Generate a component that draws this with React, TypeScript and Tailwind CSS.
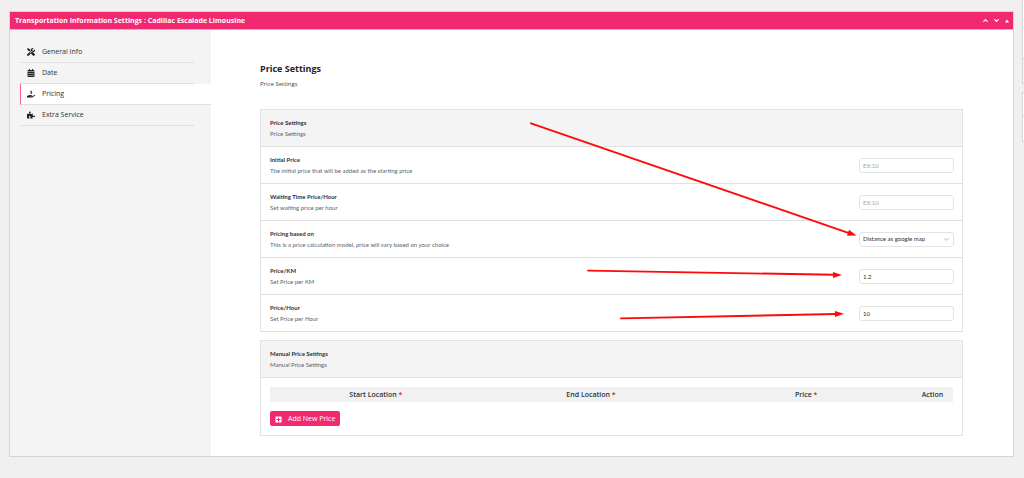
import { useId } from "react";
import type { ReactNode } from "react";
import { FaCalendarAlt, FaHandHoldingUsd, FaPlusSquare, FaPuzzlePiece, FaTools } from "react-icons/fa";
import { ChevronDown, ChevronUp } from "lucide-react";

const navItems = [
  { label: "General Info", icon: FaTools },
  { label: "Date", icon: FaCalendarAlt },
  { label: "Pricing", icon: FaHandHoldingUsd, active: true },
  { label: "Extra Service", icon: FaPuzzlePiece },
];

const field =
  "h-[15px] w-[95px] rounded-[3px] border border-[#e3e3e3] bg-white px-[3px] font-['Lato',sans-serif] text-[6px] leading-[12px] text-[#2c3338] placeholder:text-[#a5a5a5]";

function RowText({ title, text }: { title: ReactNode; text: string }) {
  return (
    <div className="font-['Lato',sans-serif] text-[6px] leading-[11px]">
      {title}
      <p className="text-[#5d646b]">{text}</p>
    </div>
  );
}

function SectionHead({ title, text }: { title: string; text: string }) {
  return (
    <div className="h-[37px] border-b border-[#e0e0e0] bg-[#f4f4f4] px-[9px] pt-[7px]">
      <RowText title={<h3 className="font-bold text-[#2c3338]">{title}</h3>} text={text} />
    </div>
  );
}

function SettingRow({ title, text, children }: { title: string; text: string; children: (id: string) => ReactNode }) {
  const id = useId();
  return (
    <div className="flex h-[37px] items-center justify-between border-b border-[#e0e0e0] pr-2 pl-[9px]">
      <RowText
        title={
          <label htmlFor={id} className="block font-bold text-[#2c3338]">
            {title}
          </label>
        }
        text={text}
      />
      {children(id)}
    </div>
  );
}

function Required() {
  return <span className="text-[#e02020]">*</span>;
}

// red callout arrows over the rows
function Arrows() {
  return (
    <svg
      className="pointer-events-none absolute top-0 right-0"
      width="440"
      height="223"
      viewBox="522 110 440 223"
      fill="#ff0a0a"
      stroke="#ff0a0a"
      aria-hidden="true"
    >
      <path d="M531 123.3 849 233.1M588 270.6 835 274.8M621 318.4 836 314" strokeWidth="1.9" strokeLinecap="round" />
      <path d="M856.5 235.6 847 235.8 849 229.8zM842 275 833 277.9V272zM844 313.7 835 316.9 834.8 310.9z" stroke="none" />
    </svg>
  );
}

export default function App() {
  return (
    <div className="flex min-h-screen items-start gap-2 bg-[#f0f0f0] pl-[9px] font-['Open_Sans',sans-serif]">
      <main className="mt-[11px] min-w-0 flex-1 border border-[#d5d5d5] bg-white">
        <header className="flex h-[18px] items-center justify-between border-b border-[#f7a5c3] bg-[#f22971] pr-1 pl-[5px] text-white">
          <h1 className="text-[7px] leading-[12px] font-bold">Transportation Information Settings : Cadillac Escalade Limousine</h1>
          <div className="flex items-center gap-1">
            <button type="button" aria-label="Move up">
              <ChevronUp size={7} strokeWidth={4} />
            </button>
            <button type="button" aria-label="Move down">
              <ChevronDown size={7} strokeWidth={4} />
            </button>
            <button type="button" aria-label="Toggle panel">
              <svg className="ml-px" width="4" height="4" viewBox="0 0 4 4" fill="currentColor">
                <path d="M2 .5 4 3.5H0z" />
              </svg>
            </button>
          </div>
        </header>

        <div className="flex">
          <nav className="w-[201px] shrink-0 bg-[#f4f4f4] pt-3 pl-[10px]">
            {navItems.map(({ label, icon: Icon, active }) => (
              <a
                key={label}
                href="#"
                className={
                  active
                    ? "flex h-[21px] items-center gap-[7px] border-b border-l border-b-[#e0e0e0] border-l-[#f75f96] bg-white pl-[6px] text-[7px] text-[#2c3338]"
                    : "mr-[17px] flex h-[21px] items-center gap-[7px] border-b border-[#e0e0e0] pl-[7px] text-[7px] text-[#2c3338]"
                }
              >
                <Icon className="h-2 w-auto text-[#1d2327]" />
                {label}
              </a>
            ))}
          </nav>

          <div className="min-w-0 flex-1 pt-8 pr-[50px] pb-5 pl-[49px]">
            <h2 className="text-[9px] leading-[14px] font-bold text-[#1d2327]">Price Settings</h2>
            <p className="mt-[2px] text-[6px] leading-[12px] text-[#3c434a]">Price Settings</p>

            <section className="relative mt-[19px] border border-b-0 border-[#e3e3e3]">
              <SectionHead title="Price Settings" text="Price Settings" />
              <SettingRow title="Initial Price" text="The initial price that will be added as the starting price">
                {(id) => <input id={id} type="text" placeholder="EX:10" className={field} />}
              </SettingRow>
              <SettingRow title="Waiting Time Price/Hour" text="Set waiting price per hour">
                {(id) => <input id={id} type="text" placeholder="EX:10" className={field} />}
              </SettingRow>
              <SettingRow title="Pricing based on" text="This is a price calculation model, price will vary based on your choice">
                {(id) => (
                  <div className="relative flex">
                    <select id={id} className={`${field} appearance-none`}>
                      <option>Distance as google map</option>
                    </select>
                    <ChevronDown className="pointer-events-none absolute top-1 right-1 text-[#8fabbb]" size={7} strokeWidth={3} />
                  </div>
                )}
              </SettingRow>
              <SettingRow title="Price/KM" text="Set Price per KM">
                {(id) => <input id={id} type="text" defaultValue="1.2" className={field} />}
              </SettingRow>
              <SettingRow title="Price/Hour" text="Set Price per Hour">
                {(id) => <input id={id} type="text" defaultValue="10" className={field} />}
              </SettingRow>
              <Arrows />
            </section>

            <section className="mt-2 border border-[#e3e3e3]">
              <SectionHead title="Manual Price Settings" text="Manual Price Settings" />
              <div className="p-[9px]">
                <table className="w-full table-fixed text-[7px] text-[#2c3338]">
                  <thead>
                    <tr className="h-[15px] bg-[#f1f1f1]">
                      <th className="w-[31%] px-0 pt-[2px] pb-0 font-semibold">Start Location <Required /></th>
                      <th className="w-[32%] px-0 pt-[2px] pb-0 font-semibold">End Location <Required /></th>
                      <th className="w-[31%] px-0 pt-[2px] pb-0 font-semibold">Price <Required /></th>
                      <th className="px-0 pt-[2px] pb-0 font-semibold">Action</th>
                    </tr>
                  </thead>
                </table>
                <button type="button" className="mt-[9px] flex h-[15px] items-center gap-[6px] rounded-[2px] bg-[#f22971] px-[5px] pt-px text-[7px] text-white">
                  <FaPlusSquare className="size-[7px]" />
                  Add New Price
                </button>
              </div>
            </section>
          </div>
        </div>
      </main>

      {/* edge of the side column */}
      <aside className="w-[2px] shrink-0">
        <div className="h-[84px] border-b border-l border-[#d5d5d5] bg-white pt-[58px]">
          <div className="h-full border-t border-[#d5d5d5] bg-[#f6f6f6]" />
        </div>
        <div className="mt-2 h-[50px] border border-r-0 border-[#d5d5d5] bg-white pt-[23px]">
          <div className="h-full border-t border-[#d5d5d5]" />
        </div>
      </aside>
    </div>
  );
}
